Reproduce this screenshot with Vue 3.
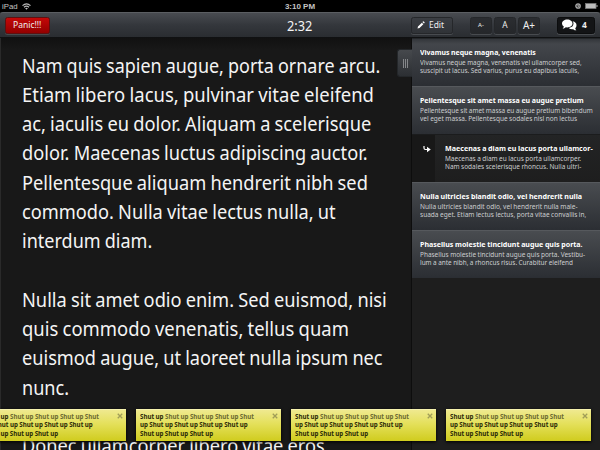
<script setup>
const paragraphs = [
  [
    ['Nam quis sapien augue, porta ornare arcu.', 358],
    ['Etiam libero lacus, pulvinar vitae eleifend', 351.5],
    ['ac, iaculis eu dolor. Aliquam a scelerisque', 349.5],
    ['dolor. Maecenas luctus adipiscing auctor.', 346],
    ['Pellentesque aliquam hendrerit nibh sed', 345.5],
    ['commodo. Nulla vitae lectus nulla, ut', 313.5],
    ['interdum diam.', 130],
  ],
  [
    ['Nulla sit amet odio enim. Sed euismod, nisi', 365],
    ['quis commodo venenatis, tellus quam', 327],
    ['euismod augue, ut laoreet nulla ipsum nec', 360.5],
    ['nunc.', 47],
  ],
  [['Donec ullamcorper libero vitae eros', 303]],
]

const comments = [
  {
    title: ['Vivamus neque magna, venenatis', 116],
    lines: [['Vivamus neque magna, venenatis vel ullamcorper sed,', 162], ['suscipit ut lacus. Sed varius, purus eu dapibus iaculis,', 159]],
  },
  {
    title: ['Pellentesque sit amet massa eu augue pretium', 164],
    lines: [['Pellentesque sit amet massa eu augue pretium bibendum', 173], ['vel eget massa. Pellentesque sodales nisl non lectus', 157]],
  },
  {
    reply: true,
    title: ['Maecenas a diam eu lacus porta ullamcor-', 148],
    lines: [['Maecenas a diam eu lacus porta ullamcorper.', 136], ['Nam sodales scelerisque rhoncus. Nulla ultri-', 136]],
  },
  {
    title: ['Nulla ultricies blandit odio, vel hendrerit nulla', 162],
    lines: [['Nulla ultricies blandit odio, vel hendrerit nulla male-', 158], ['suada eget. Etiam lectus lectus, porta vitae convallis in,', 166]],
  },
  {
    title: ['Phasellus molestie tincidunt augue quis porta.', 163],
    lines: [['Phasellus molestie tincidunt augue quis porta. Vestibu-', 165], ['lum a ante nibh, a rhoncus risus. Curabitur eleifend', 153]],
  },
]

const notes = [0, 1, 2, 3]

// Condenses a single line of text to the given measure.
const vFit = {
  mounted(el, { value }) {
    const apply = () => {
      el.style.transform = `scaleX(${value / el.offsetWidth})`
    }
    apply()
    document.fonts?.ready.then(apply)
  },
}
</script>

<template>
  <div class="screen">
    <div class="status">
      <div class="carrier">
        <span>iPad</span>
        <svg width="9" height="7" viewBox="0 0 18 14" fill="none" stroke="#bbb" stroke-width="2.3">
          <path d="M1 5.2Q9-1.8 17 5.2M4 8.5Q9 4 14 8.5" />
          <path d="M6.3 10.6Q9 8.4 11.7 10.6L9 13.4Z" fill="#bbb" stroke="none" />
        </svg>
      </div>
      <div class="clock">3:10 PM</div>
      <div class="power">
        <svg width="6" height="6" viewBox="0 0 12 12"><circle cx="6" cy="6" r="4.4" fill="#333" stroke="#aaa" stroke-width="2.6" /><path d="M6 3.5V6.5H8" fill="none" stroke="#ccc" stroke-width="1.5" /></svg>
        <svg width="13" height="6" viewBox="0 0 26 12"><rect x="1" y="1" width="21" height="10" fill="#bbb" stroke="#777" stroke-width="1.5" /><path d="M23 4H25V8H23Z" fill="#aaa" /></svg>
      </div>
    </div>

    <header class="toolbar">
      <div class="side"><button class="btn panic"><span v-fit="28.5" class="fit">Panic!!!</span></button></div>
      <div class="timer"><span v-fit="25.5" class="fit">2:32</span></div>
      <div class="side tools">
        <button class="btn edit">
          <svg width="8" height="8" viewBox="0 0 16 16" fill="#fff"><path d="M1 15L2 11L9.7 3.3L12.7 6.3L5 14ZM10.8 2.2L12 1Q13 .3 14 1.3L14.8 2.1Q15.7 3 15 4L13.8 5.2Z" /></svg>
          <span v-fit="15" class="fit">Edit</span>
        </button>
        <div class="sizes">
          <button class="btn size small">A-</button>
          <button class="btn size">A</button>
          <button class="btn size large">A+</button>
        </div>
        <button class="btn talk">
          <svg width="15" height="12" viewBox="0 0 30 24" fill="#fff">
            <path d="M21 4.5Q29 6 29 12.5Q29 16.5 26.5 18.5Q27 21 28.8 22.7Q25 22.7 22.3 20.3Q16.5 21 13.5 18Q23 16 23 9Q23 6.5 21 4.5Z" />
            <path d="M10.5 1C16.5 1 21 4.4 21 9C21 13.6 16.5 16.8 10.5 16.8Q9 16.8 7.6 16.5Q5 19.3 1.3 19.3Q3.5 17 3.6 15Q0 12.6 0 9C0 4.4 4.5 1 10.5 1Z" />
          </svg>
          <span>4</span>
        </button>
      </div>
    </header>

    <div class="content">
      <main class="reader">
        <p v-for="(p, i) in paragraphs" :key="i">
          <span v-for="[text, width] in p" :key="text" class="row"><span v-fit="width" class="fit">{{ text }}</span></span>
        </p>
        <div class="handle"><i></i><i></i><i></i></div>
      </main>
      <aside class="comments">
        <article v-for="c in comments" :key="c.title[0]" class="comment" :class="{ reply: c.reply }">
          <div v-if="c.reply" class="gutter">
            <svg width="8" height="9" viewBox="0 0 16 18"><path d="M2 2V6Q2 9 5 9H9" fill="none" stroke="#fff" stroke-width="2.4" /><path d="M8 3.5L15.5 9L8 14.5Z" fill="#fff" /></svg>
          </div>
          <div class="text">
            <h3><span v-fit="c.title[1]" class="fit">{{ c.title[0] }}</span></h3>
            <div v-for="[text, width] in c.lines" :key="text" class="line"><span v-fit="width" class="fit">{{ text }}</span></div>
          </div>
        </article>
      </aside>
    </div>

    <div class="notes">
      <div v-for="n in notes" :key="n" class="note">
        <div><span v-fit="114" class="fit">Shut up <em>Shut up Shut up Shut up Shut</em></span></div>
        <div><span v-fit="107.5" class="fit">up Shut up Shut up Shut up Shut up</span></div>
        <div><span v-fit="73.5" class="fit">Shut up Shut up Shut up</span></div>
        <svg class="close" width="6" height="6" viewBox="0 0 12 12"><path d="M1.5 1.5L10.5 10.5M10.5 1.5L1.5 10.5" stroke="#a09d58" stroke-width="2.6" /></svg>
      </div>
    </div>
  </div>
</template>

<style>
body {
  margin: 0;
  background: #181818;
}
</style>

<style scoped>
.screen {
  position: relative;
  width: 600px;
  height: 450px;
  overflow: hidden;
  display: flex;
  flex-direction: column;
  background: #181818;
  color: #f4f4f4;
  font-family: "Noto Sans", sans-serif;
}
.fit {
  display: inline-block;
  white-space: nowrap;
  word-spacing: -0.03em;
  transform-origin: 0 50%;
}
.status {
  flex: none;
  height: 12px;
  box-sizing: border-box;
  padding: 0 2px;
  display: grid;
  grid-template-columns: 1fr auto 1fr;
  align-items: center;
  background: #000;
  color: #c4c4c4;
  font: 7.8px/11px "Liberation Sans", sans-serif;
}
.carrier,
.power {
  display: flex;
  align-items: center;
  gap: 4px;
}
.clock {
  font-weight: bold;
  font-size: 8px;
}
.power {
  justify-content: flex-end;
}
.toolbar {
  flex: none;
  height: 26px;
  box-sizing: border-box;
  padding: 0 5px;
  display: grid;
  grid-template-columns: 1fr 25.5px 1fr;
  align-items: center;
  background: linear-gradient(#484b50, #34373c 50%, #2a2d31);
  border-top: 1px solid #5b5e62;
  border-bottom: 1px solid #101112;
  border-radius: 3px 3px 0 0;
}
.btn {
  height: 17px;
  box-sizing: border-box;
  padding: 0;
  border: 1px solid #25272a;
  border-radius: 2.5px;
  background: linear-gradient(#3b3e43, #303337);
  box-shadow: 0 1px 0 #484b4f;
  color: #eee;
  font: 8.4px/14px "Noto Sans", sans-serif;
  display: flex;
  align-items: center;
}
.panic {
  width: 45px;
  padding-left: 7px;
  background: linear-gradient(#c40808, #920000);
  border-color: #5e1010;
}
.timer {
  font-size: 14.5px;
  line-height: 20px;
}
.tools {
  display: flex;
  justify-content: flex-end;
}
.edit {
  width: 42px;
  padding-left: 5px;
  gap: 4px;
  margin-right: 17px;
}
.sizes {
  display: flex;
  gap: 2px;
  margin-right: 17px;
}
.size {
  width: 22px;
  justify-content: center;
  background: linear-gradient(#2b2d31, #25272a);
}
.size.small {
  font-size: 6px;
}
.size.large {
  font-size: 10px;
}
.talk {
  width: 38px;
  padding-left: 4px;
  gap: 5px;
  background: #131416;
  border-color: #0c0d0e;
  font-weight: bold;
}
.content {
  flex: 1;
  min-height: 0;
  display: flex;
}
.reader {
  position: relative;
  width: 412px;
  box-sizing: border-box;
  padding: 12.6px 0 0 21px;
  border-left: 1px solid #2a2a2a;
  border-right: 1px solid #0d0d0d;
  background: linear-gradient(#111, #181818 12px);
}
p {
  margin: 0 0 29.3px;
}
.row {
  display: block;
  height: 29.28px;
  font-size: 20.8px;
  line-height: 29.28px;
}
.handle {
  position: absolute;
  right: -1px;
  top: 11px;
  width: 15px;
  height: 28px;
  box-sizing: border-box;
  border: 1px solid #24272a;
  border-right: 0;
  border-radius: 3px 0 0 3px;
  background: linear-gradient(#46494d, #2c2f33);
  display: flex;
  justify-content: center;
  align-items: center;
  gap: 1px;
}
.handle i {
  width: 1px;
  height: 9px;
  background: #85878a;
}
.comments {
  flex: 1;
  background: #1e1e1e;
}
.comment {
  height: 48px;
  box-sizing: border-box;
  display: flex;
  border-top: 1px solid #56595d;
  background: linear-gradient(#494c50, #2b2e33);
}
.comment:first-child {
  border-top-color: #24272a;
  background: linear-gradient(#33363a, #43464b 5px, #2b2e33);
}
.comment.reply {
  background: linear-gradient(#232425, #1e1e1e);
  border-top-color: #1b1c1d;
}
.gutter {
  width: 23px;
  box-sizing: border-box;
  padding: 2px 0 0 11px;
  background: #181818;
}
.text {
  padding: 8px 0 0 8.4px;
}
.reply .text {
  padding-left: 10px;
}
h3 {
  margin: 0;
  height: 11.6px;
  font-size: 7.6px;
  line-height: 11px;
  color: #fff;
}
.line {
  height: 8.5px;
  font-size: 7px;
  line-height: 8.5px;
  color: #ccced0;
}
.notes {
  position: absolute;
  left: -19.5px;
  top: 409px;
  display: flex;
  gap: 9.5px;
}
.note {
  position: relative;
  width: 145.5px;
  height: 32px;
  box-sizing: border-box;
  padding: 3px 0 0 4.3px;
  border-top: 1px solid #f6f2ae;
  background:
    linear-gradient(176deg, transparent 62%, #fff0 62%),
    linear-gradient(#efe98f, #e4e05a 45%, #d0cc1e);
  box-shadow: 0 1px 3px #000;
  color: #2a2908;
  font-size: 6.8px;
  font-weight: bold;
  line-height: 8.4px;
}
.note > div {
  height: 8.4px;
}
em {
  font-style: normal;
  color: #6b6931;
}
.close {
  position: absolute;
  right: 3px;
  top: 2.5px;
}
</style>
